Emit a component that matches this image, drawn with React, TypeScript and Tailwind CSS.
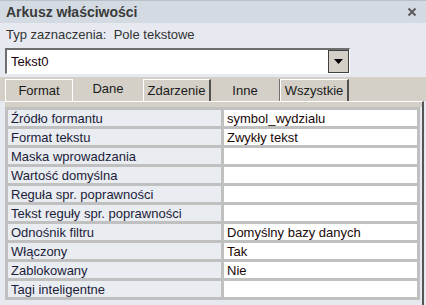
const rows: [string, string][] = [
  ["Źródło formantu", "symbol_wydzialu"],
  ["Format tekstu", "Zwykły tekst"],
  ["Maska wprowadzania", ""],
  ["Wartość domyślna", ""],
  ["Reguła spr. poprawności", ""],
  ["Tekst reguły spr. poprawności", ""],
  ["Odnośnik filtru", "Domyślny bazy danych"],
  ["Włączony", "Tak"],
  ["Zablokowany", "Nie"],
  ["Tagi inteligentne", ""],
];

function CloseIcon() {
  return (
    <svg width="10" height="10" viewBox="0 0 10 10">
      <path d="M1.5 1.5 L8.5 8.5 M8.5 1.5 L1.5 8.5" stroke="#5a5a5a" strokeWidth="2" />
    </svg>
  );
}

export default function App() {
  return (
    <div
      className="w-[426px] h-[305px] overflow-hidden bg-[#e6eaf0] flex flex-col text-[13px] leading-none"
      style={{ fontFamily: '"Liberation Sans", Arial, sans-serif' }}
    >
      {/* title bar */}
      <div className="h-[23px] shrink-0 bg-[#d3dae2] border-t border-[#b8c0ca] flex items-center justify-between pl-[6px] pr-[9px]">
        <span className="font-bold text-[14px] text-[#3a3a3a]">Arkusz właściwości</span>
        <CloseIcon />
      </div>

      <div className="h-[22px] shrink-0 flex items-center pl-[6px] text-[#333] whitespace-pre">
        Typ zaznaczenia:  Pole tekstowe
      </div>

      {/* combo */}
      <div className="mt-[3px] ml-[5px] w-[345px] h-[26px] shrink-0 flex border-t-2 border-l-2 border-[#6e6e6e] border-b border-r border-b-white border-r-white bg-white">
        <div className="flex-1 flex items-center pl-[4px] text-[#200010]">Tekst0</div>
        <div className="w-[21px] h-full bg-[#d4d0c8] border border-[#404040] flex items-center justify-center">
          <svg width="9" height="5" viewBox="0 0 9 5">
            <path d="M0 0 H9 L4.5 5 Z" fill="#000" />
          </svg>
        </div>
      </div>

      {/* tabs */}
      <div className="mt-[3px] h-[24px] shrink-0 bg-[#d4d0c8] flex items-end pl-[5px] text-[#1a1a1a]">
        <div className="w-[68px] h-[22px] border-t border-l border-r border-white flex items-center justify-center">
          Format
        </div>
        <div className="w-[70px] h-[24px] flex items-start justify-center pt-[5px]">Dane</div>
        <div className="w-[68px] h-[22px] border-t border-l border-white border-r-2 border-r-[#505050] flex items-center justify-center">
          Zdarzenie
        </div>
        <div className="w-[69px] h-[22px] border-r border-[#707070] flex items-center justify-center">Inne</div>
        <div className="w-[69px] h-[22px] border-t border-l border-white border-r-2 border-r-[#505050] flex items-center justify-center">
          Wszystkie
        </div>
      </div>

      {/* panel */}
      <div className="flex-1 ml-[5px] mr-[2px] border-t border-white border-r-2 border-r-[#555] flex flex-col">
        <div className="h-[5px] shrink-0 bg-[#d4d0c8]" />
        <div className="w-[415px] bg-[#c0c0c0] pt-[3px] pl-[3px] pr-[3px] flex flex-col gap-[3px] pb-[3px]">
          {rows.map(([label, value]) => (
            <div key={label} className="h-[16px] flex gap-[3px]">
              <div className="w-[213px] bg-[#e9ecf0] flex items-center pl-[3px] text-[#1c1c3a]">{label}</div>
              <div className="flex-1 bg-white flex items-center pl-[3px] text-[#200808]">{value}</div>
            </div>
          ))}
        </div>
      </div>
    </div>
  );
}
